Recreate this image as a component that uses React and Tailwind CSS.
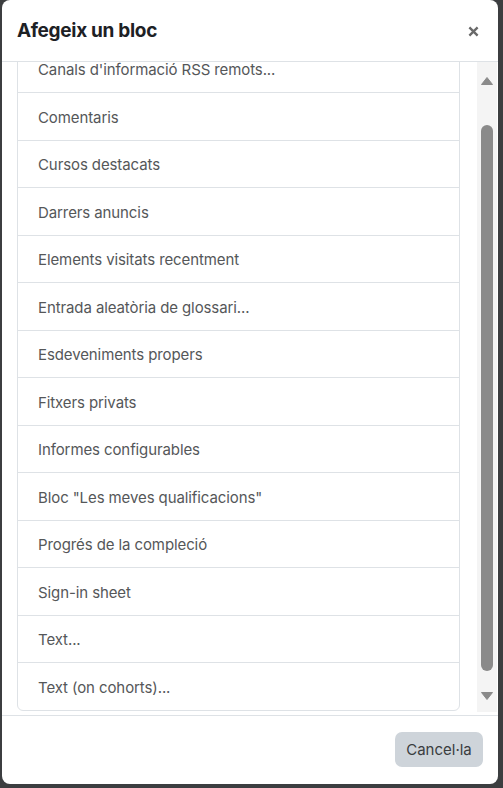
import React from "react";

const items = [
  "Canals d'informació RSS remots...",
  "Comentaris",
  "Cursos destacats",
  "Darrers anuncis",
  "Elements visitats recentment",
  "Entrada aleatòria de glossari...",
  "Esdeveniments propers",
  "Fitxers privats",
  "Informes configurables",
  'Bloc "Les meves qualificacions"',
  "Progrés de la compleció",
  "Sign-in sheet",
  "Text...",
  "Text (on cohorts)...",
];

export default function App() {
  return (
    <div
      className="w-[503px] h-[788px] bg-[#3c3e40] overflow-hidden"
      style={{ fontFamily: "Inter, 'Noto Sans', sans-serif" }}
    >
      <div className="ml-[2px] w-[496px] h-[784px] bg-white rounded-[8px] flex flex-col overflow-hidden">
        {/* header */}
        <div className="h-[62px] shrink-0 border-b border-[#dee2e6] flex items-center justify-between pl-[15px] pr-[19px]">
          <h5 className="text-[19px] font-bold text-[#1d2125] tracking-[-0.3px] mt-[1px]">Afegeix un bloc</h5>
          <svg width="11" height="11" viewBox="0 0 12 12" className="mt-[2px]">
            <path d="M1.5 1.5 L10.5 10.5 M10.5 1.5 L1.5 10.5" stroke="#6a6a6a" strokeWidth="2.6" strokeLinecap="butt" />
          </svg>
        </div>
        {/* body */}
        <div className="h-[654px] shrink-0 flex border-b border-[#dee2e6]">
          <div className="flex-1 overflow-hidden pl-[15px] pr-[17px]">
            <div className="mt-[-18.5px] border border-[#dee2e6] rounded-[6px]">
              {items.map((t, i) => (
                <div
                  key={i}
                  className={
                    "h-[47.5px] flex items-center pl-[20px] pt-[3px] text-[15px] text-[#555759] tracking-[-0.1px] " +
                    (i > 0 ? "border-t border-[#dee2e6]" : "")
                  }
                >
                  {t}
                </div>
              ))}
            </div>
          </div>
          {/* scrollbar */}
          <div className="w-[20px] h-[650px] bg-[#f4f4f4] flex flex-col items-center mr-[1px]">
            <svg width="12" height="8" viewBox="0 0 12 8" className="mt-[15px] ml-[-1px]">
              <path d="M6 0.5 L11.5 7.5 L0.5 7.5 Z" fill="#8a8a8a" strokeLinejoin="round" stroke="#8a8a8a" strokeWidth="1" />
            </svg>
            <div className="mt-[40px] w-[12px] h-[546px] rounded-full bg-[#8a8a8a] ml-[-1px]" />
            <svg width="12" height="8" viewBox="0 0 12 8" className="mt-[21px] ml-[-1px]">
              <path d="M0.5 0.5 L11.5 0.5 L6 7.5 Z" fill="#8a8a8a" strokeLinejoin="round" stroke="#8a8a8a" strokeWidth="1" />
            </svg>
          </div>
        </div>
        {/* footer */}
        <div className="flex-1 flex items-start justify-end pr-[15px] pt-[16px]">
          <button className="h-[35px] w-[88px] rounded-[7px] bg-[#ced4da] text-[15px] text-[#3a3d40] pt-[1px]">
            Cancel·la
          </button>
        </div>
      </div>
    </div>
  );
}
